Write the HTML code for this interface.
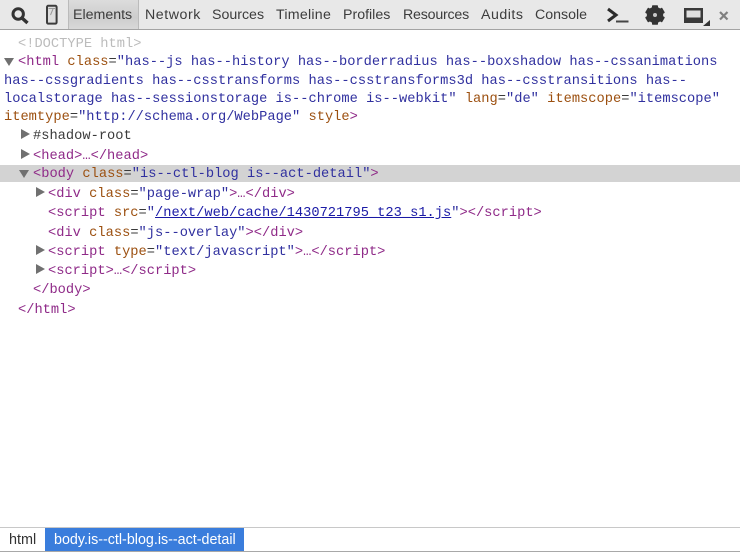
<!DOCTYPE html>
<html><head><meta charset="utf-8">
<style>
html,body{margin:0;padding:0;width:740px;height:552px;overflow:hidden;background:#fff}
body{position:relative}
.l{position:absolute;white-space:pre;font:13.7px/19px "Liberation Mono",monospace;letter-spacing:.015px;color:#3a3a3a;height:19px}
.t{color:#8f2a88}.a{color:#9c5010}.v{color:#30309f}.g{color:#bcbcbc}
.k{color:#1a1aa6;text-decoration:underline}
.tab{position:absolute;top:5px;font:14.2px/20px "Liberation Sans",sans-serif;color:#3c3c3c;white-space:pre}
.ar{position:absolute;width:0;height:0}
.r{border-left:9px solid #707070;border-top:5px solid transparent;border-bottom:5px solid transparent}
.d{border-top:8px solid #707070;border-left:5px solid transparent;border-right:5px solid transparent}
svg{position:absolute}
</style></head><body>
<div style="position:absolute;left:0;top:0;width:740px;height:29px;background:#e8e8e8;border-bottom:1px solid #a3a3a3"></div>
<div style="position:absolute;left:68px;top:0;width:71px;height:29px;background:linear-gradient(#dcdcdc,#cdcdcd 60%,#d8d8d8);border-left:1px solid #bbb;border-right:1px solid #bbb;box-sizing:border-box"></div>
<svg style="left:10px;top:6px" width="20" height="20" viewBox="0 0 20 20"><circle cx="8.2" cy="8" r="5.2" fill="none" stroke="#333" stroke-width="3"/><path d="M12 12L17.5 17" stroke="#333" stroke-width="3.4"/></svg>
<svg style="left:44px;top:4px" width="15" height="22" viewBox="0 0 15 22"><rect x="3" y="1.8" width="9.6" height="17.8" rx="1.2" fill="#dedede" stroke="#3c3c3c" stroke-width="2"/><path d="M4.5 4.5H11M9 5L6.5 11" stroke="#999" stroke-width="1" fill="none"/></svg>
<div class="tab" style="left:73px">Elements</div>
<div class="tab" style="left:145px;letter-spacing:.55px">Network</div>
<div class="tab" style="left:212px">Sources</div>
<div class="tab" style="left:276px;letter-spacing:.25px">Timeline</div>
<div class="tab" style="left:343px">Profiles</div>
<div class="tab" style="left:403px;letter-spacing:-.2px">Resources</div>
<div class="tab" style="left:481px;letter-spacing:.5px">Audits</div>
<div class="tab" style="left:535px">Console</div>
<svg style="left:606px;top:6px" width="24" height="18" viewBox="0 0 24 18"><path d="M2 3L10 9L2 15" fill="none" stroke="#2c2c2c" stroke-width="3"/><path d="M10 15.5H22.5" stroke="#444" stroke-width="2"/></svg>
<svg style="left:644px;top:4px" width="22" height="22" viewBox="0 0 22 22"><g fill="#333"><circle cx="11" cy="11" r="8.2"/><rect x="8" y="1.2" width="6" height="19.6" rx=".8"/><rect x="8" y="1.2" width="6" height="19.6" rx=".8" transform="rotate(60 11 11)"/><rect x="8" y="1.2" width="6" height="19.6" rx=".8" transform="rotate(120 11 11)"/></g><circle cx="11" cy="11" r="2" fill="#c8c8c8"/></svg>
<svg style="left:683px;top:6px" width="28" height="21" viewBox="0 0 28 21"><rect x="1" y="2" width="19" height="15" fill="#3a3a3a"/><rect x="3.5" y="4.5" width="14" height="7" fill="#e0e0e0"/><path d="M20 20L27 20L27 14Z" fill="#333"/></svg>
<svg style="left:718px;top:10px" width="12" height="12" viewBox="0 0 12 12"><path d="M2 2L9.5 9.5M9.5 2L2 9.5" stroke="#808080" stroke-width="2.2"/></svg>

<div style="position:absolute;left:0;top:165px;width:740px;height:17px;background:#d3d3d3"></div>

<div class="l g" style="left:18px;top:35px">&lt;!DOCTYPE html&gt;</div>
<div class="ar d" style="left:4px;top:58px"></div>
<div class="l" style="left:18px;top:53px"><span class="t">&lt;html</span> <span class="a">class</span>=<span class="v">"has--js has--history has--borderradius has--boxshadow has--cssanimations</span></div>
<div class="l v" style="left:4px;top:72px">has--cssgradients has--csstransforms has--csstransforms3d has--csstransitions has--</div>
<div class="l" style="left:4px;top:90px"><span class="v">localstorage has--sessionstorage is--chrome is--webkit"</span> <span class="a">lang</span>=<span class="v">"de"</span> <span class="a">itemscope</span>=<span class="v">"itemscope"</span></div>
<div class="l" style="left:4px;top:108px"><span class="a">itemtype</span>=<span class="v">"http://schema.org/WebPage"</span> <span class="a">style</span><span class="t">&gt;</span></div>
<div class="ar r" style="left:21px;top:129px"></div>
<div class="l" style="left:33px;top:127px">#shadow-root</div>
<div class="ar r" style="left:21px;top:149px"></div>
<div class="l t" style="left:33px;top:147px">&lt;head&gt;…&lt;/head&gt;</div>
<div class="ar d" style="left:19px;top:170px"></div>
<div class="l" style="left:33px;top:165px"><span class="t">&lt;body</span> <span class="a">class</span>=<span class="v">"is--ctl-blog is--act-detail"</span><span class="t">&gt;</span></div>
<div class="ar r" style="left:36px;top:187px"></div>
<div class="l" style="left:48px;top:185px"><span class="t">&lt;div</span> <span class="a">class</span>=<span class="v">"page-wrap"</span><span class="t">&gt;…&lt;/div&gt;</span></div>
<div class="l" style="left:48px;top:204px"><span class="t">&lt;script</span> <span class="a">src</span>=<span class="v">"</span><span class="k">/next/web/cache/1430721795_t23_s1.js</span><span class="v">"</span><span class="t">&gt;&lt;/script&gt;</span></div>
<div class="l" style="left:48px;top:224px"><span class="t">&lt;div</span> <span class="a">class</span>=<span class="v">"js--overlay"</span><span class="t">&gt;&lt;/div&gt;</span></div>
<div class="ar r" style="left:36px;top:245px"></div>
<div class="l" style="left:48px;top:243px"><span class="t">&lt;script</span> <span class="a">type</span>=<span class="v">"text/javascript"</span><span class="t">&gt;…&lt;/script&gt;</span></div>
<div class="ar r" style="left:36px;top:264px"></div>
<div class="l t" style="left:48px;top:262px">&lt;script&gt;…&lt;/script&gt;</div>
<div class="l t" style="left:33px;top:281px">&lt;/body&gt;</div>
<div class="l t" style="left:18px;top:301px">&lt;/html&gt;</div>

<div style="position:absolute;left:0;top:527px;width:740px;height:25px;border-top:1px solid #c8c8c8;border-bottom:1px solid #a8a8a8;box-sizing:border-box;background:#fff"></div>
<div style="position:absolute;left:9px;top:531px;font:14.4px/19px 'Liberation Sans',sans-serif;color:#333">html</div>
<div style="position:absolute;left:45px;top:528px;width:199px;height:23px;background:#3a7ddc;color:#fff;font:14.3px/25px 'Liberation Sans',sans-serif;white-space:pre;text-indent:9px">body.is--ctl-blog.is--act-detail</div>
</body></html>
